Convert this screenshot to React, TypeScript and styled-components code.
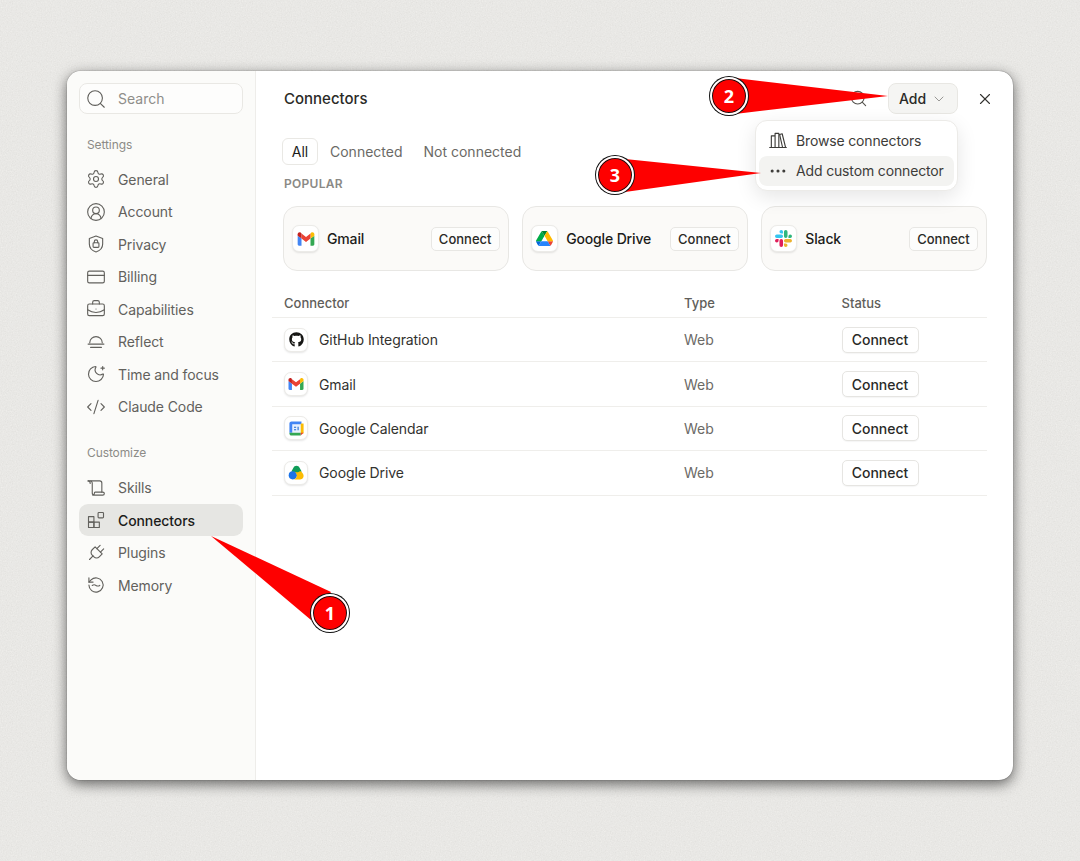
import styled, { createGlobalStyle } from "styled-components";
import {
  BriefcaseBusiness,
  ChevronDown,
  CircleUserRound,
  CodeXml,
  CreditCard,
  Ellipsis,
  MoonStar,
  Search,
  Settings,
  X,
} from "lucide-react";
import { FaGithub } from "react-icons/fa";
import type { ReactNode } from "react";

const noise =
  "url(\"data:image/svg+xml,%3Csvg xmlns='http://www.w3.org/2000/svg' width='240' height='240'%3E%3Cfilter id='n'%3E%3CfeTurbulence type='fractalNoise' baseFrequency='.8' numOctaves='3' stitchTiles='stitch'/%3E%3CfeColorMatrix values='0 0 0 0 0 0 0 0 0 0 0 0 0 0 0 0 0 0 .07 0'/%3E%3C/filter%3E%3Crect width='240' height='240' filter='url(%23n)'/%3E%3C/svg%3E\")";

const GlobalStyle = createGlobalStyle`
  html, body {
    margin: 0;
    padding: 0;
  }
  body {
    background-color: #f1f0ed;
    background-image: ${noise};
    font-family: Inter, "Liberation Sans", sans-serif;
  }
  * {
    box-sizing: border-box;
  }
`;

const Page = styled.div`
  position: relative;
  width: 1080px;
  height: 861px;
  padding: 71px 67px 81px;
  overflow: hidden;
`;
const Window = styled.div`
  display: flex;
  width: 946px;
  height: 709px;
  border-radius: 14px;
  overflow: hidden;
  background: #ffffff;
  box-shadow: 0 0 1px rgba(0, 0, 0, 0.7), 0 4px 14px rgba(0, 0, 0, 0.58);
`;
const Sidebar = styled.aside`
  display: flex;
  flex-direction: column;
  width: 189px;
  padding: 12px 12px 0;
  background: #fbfbf9;
  border-right: 1px solid #eeedea;
`;
const SearchBox = styled.div`
  display: flex;
  align-items: center;
  gap: 11px;
  height: 31px;
  padding-left: 5px;
  border: 1px solid #e9e8e4;
  border-radius: 8px;
  background: #fdfdfc;
  color: #8f8e8a;
  font-size: 14px;
`;
const SideLabel = styled.div<{ $gap: number; $after: number }>`
  height: 18px;
  margin: ${(p) => p.$gap}px 0 ${(p) => p.$after}px 8px;
  color: #8c8b87;
  font-size: 12px;
  line-height: 18px;
  letter-spacing: -0.1px;
`;
const NavList = styled.nav`
  display: flex;
  flex-direction: column;
  gap: 0.5px;
`;
const NavItem = styled.a<{ $active?: boolean }>`
  display: flex;
  align-items: center;
  gap: 12px;
  height: 32px;
  padding-left: 7px;
  border-radius: 9px;
  background: ${(p) => (p.$active ? "#e6e6e3" : "transparent")};
  color: ${(p) => (p.$active ? "#1c1c1a" : "#62615d")};
  font-size: 14px;
  font-weight: ${(p) => (p.$active ? 500 : 400)};
  letter-spacing: -0.1px;
  svg {
    flex: none;
    color: #62615d;
  }
`;
const Main = styled.main`
  flex: 1;
  min-width: 0;
  padding: 12px 26px 0 27px;
`;
const Header = styled.header`
  display: flex;
  align-items: center;
  height: 31px;
  padding-left: 1px;
`;
const Title = styled.h1`
  flex: 1;
  margin: 0;
  color: #2a2a27;
  font-size: 15px;
  font-weight: 450;
`;
const HeaderSearch = styled.span`
  display: flex;
  margin-right: 20px;
  color: #55544f;
`;
const AddButton = styled.button`
  display: flex;
  align-items: center;
  justify-content: center;
  gap: 5px;
  width: 70px;
  height: 31px;
  border: 1px solid #e8e7e3;
  border-radius: 8px;
  background: #f5f5f3;
  color: #2a2a27;
  font: 450 14px Inter, sans-serif;
  svg {
    color: #8a8985;
  }
`;
const CloseButton = styled.span`
  display: flex;
  margin: 0 -7px 0 18px;
  color: #33322f;
`;
const Tabs = styled.div`
  display: flex;
  align-items: center;
  gap: 21px;
  height: 27px;
  margin: 24px 0 0 -1px;
  color: #6b6a66;
  font-size: 14px;
`;
const ActiveTab = styled.span`
  display: flex;
  align-items: center;
  justify-content: center;
  width: 36px;
  height: 27px;
  margin-right: -9px;
  border: 1px solid #e9e8e4;
  border-radius: 6px;
  color: #1c1c1a;
`;
const SectionLabel = styled.div`
  margin: 10px 0 0 1px;
  color: #8a8985;
  font-size: 12px;
  font-weight: 600;
  line-height: 18px;
  letter-spacing: 0.3px;
`;
const Cards = styled.div`
  display: grid;
  grid-template-columns: repeat(3, 1fr);
  gap: 13.5px;
  margin-top: 13px;
`;
const Card = styled.div`
  display: flex;
  align-items: center;
  height: 65px;
  padding: 0 8px;
  border: 1px solid #e8e7e4;
  border-radius: 14px;
  background: #fbfaf8;
`;
const IconTile = styled.span<{ $size: number }>`
  display: flex;
  flex: none;
  align-items: center;
  justify-content: center;
  width: ${(p) => p.$size}px;
  height: ${(p) => p.$size}px;
  border: 1px solid #ecebe8;
  border-radius: 7px;
  background: #ffffff;
  box-shadow: 0 1px 2px rgba(0, 0, 0, 0.1);
`;
const CardName = styled.span`
  flex: 1;
  margin-left: 8px;
  color: #1c1c1a;
  font-size: 14px;
  font-weight: 550;
  letter-spacing: -0.15px;
`;
const SmallConnect = styled.button`
  width: 69px;
  height: 24px;
  padding: 0;
  border: 1px solid #e8e7e4;
  border-radius: 5px;
  background: #fdfdfc;
  color: #2a2a27;
  font: 450 13px Inter, sans-serif;
`;
const Table = styled.div`
  margin: 17px 0 0 -11px;
  font-size: 14px;
`;
const Row = styled.div<{ $head?: boolean }>`
  display: grid;
  grid-template-columns: 400px 157.5px 1fr;
  align-items: center;
  height: ${(p) => (p.$head ? "30px" : "44.4px")};
  padding-left: 12px;
  border-bottom: 1px solid #efeeeb;
  color: ${(p) => (p.$head ? "#5f5e5a" : "#6b6a66")};
  font-size: ${(p) => (p.$head ? "13px" : "14px")};
  font-weight: ${(p) => (p.$head ? 500 : 400)};
`;
const NameCell = styled.span`
  display: flex;
  align-items: center;
  gap: 11px;
  color: #33322f;
  letter-spacing: -0.1px;
`;
const RowConnect = styled.button`
  width: 77px;
  height: 26px;
  padding: 0;
  border: 1px solid #e6e5e2;
  border-radius: 5px;
  background: #ffffff;
  box-shadow: 0 1px 1px rgba(0, 0, 0, 0.04);
  color: #2a2a27;
  font: 450 14px Inter, sans-serif;
`;
const Menu = styled.div`
  position: absolute;
  top: 120px;
  left: 755px;
  display: flex;
  flex-direction: column;
  width: 203px;
  height: 71px;
  padding: 4px 3px;
  border: 1px solid #ecebe8;
  border-radius: 12px;
  background: #ffffff;
  box-shadow: 0 6px 20px rgba(0, 0, 0, 0.1);
`;
const MenuItem = styled.div<{ $active?: boolean }>`
  display: flex;
  align-items: center;
  gap: 8px;
  height: 31px;
  padding-left: 9px;
  border-radius: 8px;
  background: ${(p) => (p.$active ? "#f3f3f1" : "transparent")};
  color: #3d3c39;
  font-size: 14px;
  letter-spacing: -0.15px;
  svg {
    flex: none;
  }
`;
const ArrowLayer = styled.svg`
  position: absolute;
  top: 0;
  left: 0;
  pointer-events: none;
`;
const Badge = styled.span<{ $x: number; $y: number }>`
  position: absolute;
  top: ${(p) => p.$y - 19}px;
  left: ${(p) => p.$x - 19}px;
  display: flex;
  align-items: center;
  justify-content: center;
  width: 38px;
  height: 38px;
  border: 2px solid #ffffff;
  border-radius: 50%;
  background: #fe0000;
  box-shadow: 0 0 0 1px #111111, inset 0 0 0 1px #111111;
  color: #ffffff;
  font: 700 18px "Open Sans", sans-serif;
`;

const lineProps = {
  width: 20,
  height: 20,
  viewBox: "0 0 24 24",
  fill: "none",
  stroke: "currentColor",
  strokeWidth: 1.35,
  strokeLinecap: "round" as const,
  strokeLinejoin: "round" as const,
};

function PrivacyIcon() {
  return (
    <svg {...lineProps}>
      <path d="M12 2.500 20 5.500v6.500c0 4.600-3.200 8-8 9.500-4.800-1.500-8-4.900-8-9.500V5.500z" />
      <rect x="8.500" y="10.500" width="7" height="5.500" rx="1" />
      <path d="M10 10.500V9a2 2 0 0 1 4 0v1.500" />
    </svg>
  );
}

function ReflectIcon() {
  return (
    <svg {...lineProps}>
      <path d="M4.500 13a7.500 7.500 0 0 1 15 0" />
      <path d="M2.500 14.500h19M5.500 18.500h13" />
    </svg>
  );
}

function SkillsIcon() {
  return (
    <svg {...lineProps}>
      <path d="M2.500 3.500h14c1.400 0 2.500 1.100 2.500 2.500v11" />
      <path d="M2.500 3.500c1.500 0 2.500 1 2.500 2.500v.5M6 3.500c1 .7 1.500 1.500 1.500 2.500v12c0 1.400 1 2.500 2.500 2.500h10c1.200 0 2-1 2-2s-.8-1.500-2-1.500H11c-.6 0-1 .6-1 1.500s-.5 2-2 2" />
    </svg>
  );
}

function ConnectorsIcon() {
  return (
    <svg {...lineProps}>
      <rect x="3" y="8" width="6.500" height="6.500" />
      <rect x="3" y="14.500" width="6.500" height="6.500" />
      <rect x="9.500" y="14.500" width="6.500" height="6.500" />
      <rect x="14.500" y="3" width="6.500" height="6.500" rx="1" />
    </svg>
  );
}

function PluginsIcon() {
  return (
    <svg {...lineProps}>
      <g transform="rotate(45 12 12)">
        <path d="M12 23v-6M9 7.500V2M15 7.500V2" />
        <path d="M18 7.500v5a4.500 4.500 0 0 1-4.500 4.500h-3A4.500 4.500 0 0 1 6 12.500v-5z" />
      </g>
    </svg>
  );
}

function MemoryIcon() {
  return (
    <svg {...lineProps}>
      <path d="M3.500 12a8.500 8.500 0 1 0 2.600-6.100L3.500 8.500" />
      <path d="M3.500 3.500v5h5" />
      <path d="M7.500 12.500c1.500-1 3-1 4.500 0s3 1 4.500 0" />
    </svg>
  );
}

function BrowseIcon() {
  return (
    <svg {...lineProps} stroke="#3d3c39">
      <path d="M2 21h20" />
      <path d="M4 21V7h4.500v14M8.500 21V4h4.500v17" />
      <path d="M14 5.500l3-1 4 16" />
      <path d="M14 5.500 17.500 21" />
    </svg>
  );
}

function GmailIcon({ size }: { size: number }) {
  return (
    <svg width={size} height={size} viewBox="0 0 24 24">
      <path fill="#4285f4" d="M3.600 20h3v-8.500L2 8v10.400c0 .9.7 1.600 1.600 1.600z" />
      <path fill="#34a853" d="M17.400 20h3c.9 0 1.600-.7 1.600-1.600V8l-4.600 3.500z" />
      <path fill="#fbbc04" d="M17.400 5.500v6L22 8V6.300c0-2-2.200-3.100-3.800-1.900z" />
      <path fill="#ea4335" d="M6.600 11.500v-6L12 9.600l5.400-4.100v6L12 15.600z" />
      <path fill="#c5221f" d="M2 6.300V8l4.600 3.500v-6l-.8-1.100C4.200 3.200 2 4.300 2 6.300z" />
    </svg>
  );
}

function DriveIcon({ size }: { size: number }) {
  return (
    <svg width={size} height={size} viewBox="0 0 87.3 78">
      <path fill="#0066da" d="m6.600 66.850 3.850 6.650c.8 1.400 1.950 2.500 3.300 3.300l13.750-23.800h-27.500c0 1.550.4 3.100 1.200 4.500z" />
      <path fill="#00ac47" d="m43.650 25-13.750-23.800c-1.350.8-2.500 1.900-3.300 3.300l-25.400 44a9.060 9.060 0 0 0 -1.200 4.500h27.500z" />
      <path fill="#ea4335" d="m73.550 76.800c1.350-.8 2.500-1.900 3.300-3.300l1.600-2.750 7.650-13.250c.8-1.400 1.200-2.950 1.200-4.500h-27.502l5.852 11.500z" />
      <path fill="#00832d" d="m43.650 25 13.750-23.800c-1.350-.8-2.900-1.200-4.500-1.200h-18.500c-1.600 0-3.150.45-4.500 1.200z" />
      <path fill="#2684fc" d="m59.800 53h-32.300l-13.750 23.800c1.350.8 2.900 1.200 4.500 1.200h50.800c1.600 0 3.150-.45 4.500-1.200z" />
      <path fill="#ffba00" d="m73.400 26.500-12.700-22c-.8-1.400-1.950-2.500-3.300-3.300l-13.750 23.800 16.150 28h27.450c0-1.550-.4-3.100-1.200-4.500z" />
    </svg>
  );
}

function NewDriveIcon() {
  return (
    <svg width="17" height="17" viewBox="0 0 24 24">
      <path fill="#0f9d58" d="M12 2.500c2 0 3.300 1 4.300 2.700l3 5.300-7.300 3-7.300-3 3-5.300c1-1.700 2.300-2.700 4.300-2.700z" />
      <circle cx="6.800" cy="16" r="5.800" fill="#1a73e8" />
      <path fill="#fbbc04" d="M9.500 11.500h5c.8 0 1.800-.5 2.500-1.500 1.500.5 3 1.800 4.500 4.500 1.500 3.500-.5 7.300-4.500 7.300H8.500c2.500-.5 4-2.800 4-5.800 0-1.800-1-3.500-3-4.500z" />
    </svg>
  );
}

function SlackIcon() {
  return (
    <svg width="17" height="17" viewBox="0 0 24 24">
      <path fill="#e01e5a" d="M5.042 15.165a2.528 2.528 0 0 1-2.520 2.523A2.528 2.528 0 0 1 0 15.165a2.527 2.527 0 0 1 2.522-2.520h2.520v2.520zM6.313 15.165a2.527 2.527 0 0 1 2.521-2.520 2.527 2.527 0 0 1 2.521 2.520v6.313A2.528 2.528 0 0 1 8.834 24a2.528 2.528 0 0 1-2.521-2.522v-6.313z" />
      <path fill="#36c5f0" d="M8.834 5.042a2.528 2.528 0 0 1-2.521-2.520A2.528 2.528 0 0 1 8.834 0a2.528 2.528 0 0 1 2.521 2.522v2.520H8.834zM8.834 6.313a2.528 2.528 0 0 1 2.521 2.521 2.528 2.528 0 0 1-2.521 2.521H2.522A2.528 2.528 0 0 1 0 8.834a2.528 2.528 0 0 1 2.522-2.521h6.312z" />
      <path fill="#2eb67d" d="M18.956 8.834a2.528 2.528 0 0 1 2.522-2.521A2.528 2.528 0 0 1 24 8.834a2.528 2.528 0 0 1-2.522 2.521h-2.522V8.834zM17.688 8.834a2.528 2.528 0 0 1-2.523 2.521 2.527 2.527 0 0 1-2.520-2.521V2.522A2.527 2.527 0 0 1 15.165 0a2.528 2.528 0 0 1 2.523 2.522v6.312z" />
      <path fill="#ecb22e" d="M15.165 18.956a2.528 2.528 0 0 1 2.523 2.522A2.528 2.528 0 0 1 15.165 24a2.527 2.527 0 0 1-2.520-2.522v-2.522h2.520zM15.165 17.688a2.527 2.527 0 0 1-2.520-2.523 2.526 2.526 0 0 1 2.520-2.520h6.313A2.527 2.527 0 0 1 24 15.165a2.528 2.528 0 0 1-2.522 2.523h-6.313z" />
    </svg>
  );
}

function CalendarIcon() {
  return (
    <svg width="17" height="17" viewBox="0 0 24 24">
      <rect x="6" y="6" width="12" height="12" fill="#e8f0fe" />
      <path fill="#4285f4" d="M5 2h14v4H6v12H2V5c0-1.700 1.300-3 3-3z" />
      <path fill="#fbbc04" d="M18 5h4v14h-4z" />
      <path fill="#34a853" d="M5 18h13v4H5c-1.700 0-3-1.300-3-3v-1z" />
      <path fill="#ea4335" d="M18 18h4l-4 4z" />
      <path fill="#1967d2" d="M8.500 9.500h3v1.500h-3zM8.500 13h3v1.500h-3zM13.500 9.500h1.500v5h-1.500z" />
    </svg>
  );
}

const settingsNav: { label: string; icon: ReactNode }[] = [
  { label: "General", icon: <Settings size={20} strokeWidth={1.35} /> },
  { label: "Account", icon: <CircleUserRound size={20} strokeWidth={1.35} /> },
  { label: "Privacy", icon: <PrivacyIcon /> },
  { label: "Billing", icon: <CreditCard size={20} strokeWidth={1.35} /> },
  { label: "Capabilities", icon: <BriefcaseBusiness size={20} strokeWidth={1.35} /> },
  { label: "Reflect", icon: <ReflectIcon /> },
  { label: "Time and focus", icon: <MoonStar size={20} strokeWidth={1.35} /> },
  { label: "Claude Code", icon: <CodeXml size={20} strokeWidth={1.35} /> },
];

const customizeNav: { label: string; icon: ReactNode }[] = [
  { label: "Skills", icon: <SkillsIcon /> },
  { label: "Connectors", icon: <ConnectorsIcon /> },
  { label: "Plugins", icon: <PluginsIcon /> },
  { label: "Memory", icon: <MemoryIcon /> },
];

const popular = [
  { name: "Gmail", icon: <GmailIcon size={20} /> },
  { name: "Google Drive", icon: <DriveIcon size={17} /> },
  { name: "Slack", icon: <SlackIcon /> },
];

const connectors = [
  { name: "GitHub Integration", icon: <FaGithub size={15} color="#161614" /> },
  { name: "Gmail", icon: <GmailIcon size={18} /> },
  { name: "Google Calendar", icon: <CalendarIcon /> },
  { name: "Google Drive", icon: <NewDriveIcon /> },
];

export default function App() {
  return (
    <Page>
      <GlobalStyle />
      <Window>
        <Sidebar>
          <SearchBox>
            <Search size={22} strokeWidth={1.2} color="#5f5e5a" />
            Search
          </SearchBox>
          <SideLabel $gap={22} $after={9}>Settings</SideLabel>
          <NavList>
            {settingsNav.map((item) => (
              <NavItem key={item.label}>
                {item.icon}
                {item.label}
              </NavItem>
            ))}
          </NavList>
          <SideLabel $gap={21} $after={10}>Customize</SideLabel>
          <NavList>
            {customizeNav.map((item) => (
              <NavItem key={item.label} $active={item.label === "Connectors"}>
                {item.icon}
                {item.label}
              </NavItem>
            ))}
          </NavList>
        </Sidebar>
        <Main>
          <Header>
            <Title>Connectors</Title>
            <HeaderSearch>
              <Search size={19} strokeWidth={1.4} />
            </HeaderSearch>
            <AddButton>
              Add
              <ChevronDown size={16} strokeWidth={1.3} />
            </AddButton>
            <CloseButton>
              <X size={18} strokeWidth={1.5} />
            </CloseButton>
          </Header>
          <Tabs>
            <ActiveTab>All</ActiveTab>
            <span>Connected</span>
            <span>Not connected</span>
          </Tabs>
          <SectionLabel>POPULAR</SectionLabel>
          <Cards>
            {popular.map((item) => (
              <Card key={item.name}>
                <IconTile $size={27}>{item.icon}</IconTile>
                <CardName>{item.name}</CardName>
                <SmallConnect>Connect</SmallConnect>
              </Card>
            ))}
          </Cards>
          <Table>
            <Row $head>
              <span>Connector</span>
              <span>Type</span>
              <span>Status</span>
            </Row>
            {connectors.map((item) => (
              <Row key={item.name}>
                <NameCell>
                  <IconTile $size={24}>{item.icon}</IconTile>
                  {item.name}
                </NameCell>
                <span>Web</span>
                <span>
                  <RowConnect>Connect</RowConnect>
                </span>
              </Row>
            ))}
          </Table>
        </Main>
      </Window>
      <Menu>
        <MenuItem>
          <BrowseIcon />
          Browse connectors
        </MenuItem>
        <MenuItem $active>
          <Ellipsis size={20} strokeWidth={1.7} />
          Add custom connector
        </MenuItem>
      </Menu>
      <ArrowLayer width="1080" height="861">
        <polygon points="211,536 331,592 311,620" fill="#fe0000" />
        <polygon points="888,96 735,78 735,114" fill="#fe0000" />
        <polygon points="761,173 625,159 625,192" fill="#fe0000" />
      </ArrowLayer>
      <Badge $x={330} $y={613}>1</Badge>
      <Badge $x={729} $y={96}>2</Badge>
      <Badge $x={615} $y={175}>3</Badge>
    </Page>
  );
}
